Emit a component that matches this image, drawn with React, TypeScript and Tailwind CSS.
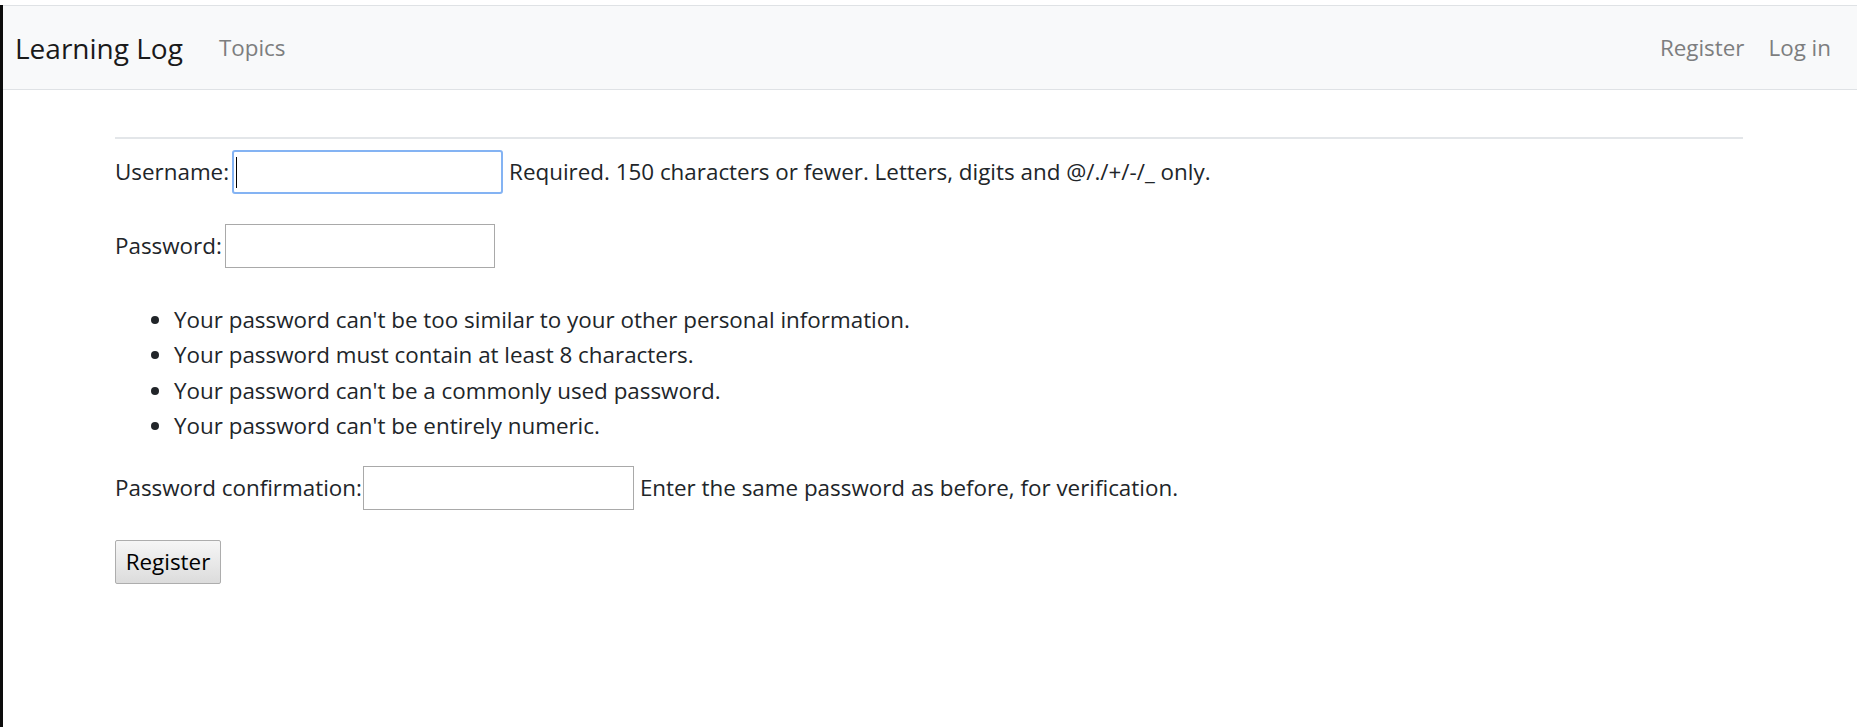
import React from 'react';

const FONT = '"Open Sans", "Noto Sans", sans-serif';

const rules = [
    "Your password can't be too similar to your other personal information.",
    'Your password must contain at least 8 characters.',
    "Your password can't be a commonly used password.",
    "Your password can't be entirely numeric.",
];

const TextInput = ({ focused = false, width }: { focused?: boolean; width: string }) => (
    <div className={`relative h-[44px] ${width}`}>
        <input
            type="text"
            className={
                focused
                    ? 'h-full w-full rounded-[3px] border-2 border-[#84b3f3] bg-white outline-none'
                    : 'h-full w-full border border-[#a9a9a9] bg-white outline-none'
            }
        />
        {focused && <span className="absolute left-[4px] top-[7px] h-[31px] w-px bg-black" />}
    </div>
);

export default function App() {
    return (
        <div className="h-[727px] w-full border-l-[3px] border-[#0c0c0c] bg-white text-[#212529]" style={{ fontFamily: FONT }}>
            {/* navbar */}
            <nav className="mt-[5px] flex h-[85px] items-center justify-between border-y border-[#dfe2e5] bg-[#f8f9fa] pl-[12px] pr-[26px]">
                <div className="flex items-center">
                    <a className="text-[28px] text-[#1a1a1a]">Learning Log</a>
                    <a className="ml-[36px] text-[22.4px] text-[#7d7e7f]">Topics</a>
                </div>
                <div className="flex items-center gap-[24px] text-[22.4px] text-[#7d7e7f]">
                    <a>Register</a>
                    <a>Log in</a>
                </div>
            </nav>

            {/* form */}
            <div className="pl-[112px] pr-[114px] pt-[47px] text-[22.4px]">
                <div className="h-[2px] bg-[#e3e6e9]" />
                <div className="mt-[11px] flex items-center">
                    <span>Username:</span>
                    <div className="ml-[3px]"><TextInput focused width="w-[271px]" /></div>
                    <span className="ml-[6px]">Required. 150 characters or fewer. Letters, digits and @/./+/-/_ only.</span>
                </div>
                <div className="mt-[30px] flex items-center">
                    <span>Password:</span>
                    <div className="ml-[3px]"><TextInput width="w-[270px]" /></div>
                </div>
                <ul className="mt-[34px] list-disc pl-[59px] leading-[35.4px]">
                    {rules.map((r, i) => (
                        <li key={i}>{r}</li>
                    ))}
                </ul>
                <div className="mt-[22px] flex items-center">
                    <span>Password confirmation:</span>
                    <div className="ml-[1px]"><TextInput width="w-[271px]" /></div>
                    <span className="ml-[6px]">Enter the same password as before, for verification.</span>
                </div>
                <button className="mt-[30px] h-[44px] w-[106px] rounded-[2px] border border-[#adadad] bg-gradient-to-b from-[#f6f6f6] to-[#dcdcdc] text-[22.4px] text-black">
                    Register
                </button>
            </div>
        </div>
    );
}
